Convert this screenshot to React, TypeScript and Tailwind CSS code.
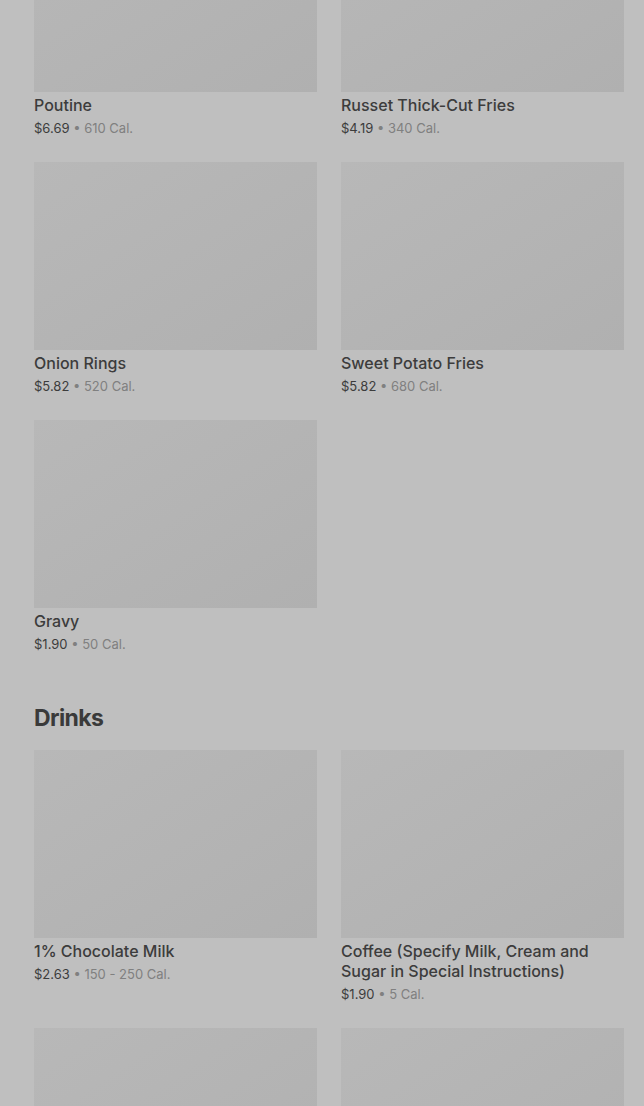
import React from "react";

type Item = { name: string; price: string; cal: string };

const sides: Item[] = [
  { name: "Poutine", price: "$6.69", cal: "610 Cal." },
  { name: "Russet Thick-Cut Fries", price: "$4.19", cal: "340 Cal." },
  { name: "Onion Rings", price: "$5.82", cal: "520 Cal." },
  { name: "Sweet Potato Fries", price: "$5.82", cal: "680 Cal." },
  { name: "Gravy", price: "$1.90", cal: "50 Cal." },
];

const drinks: Item[] = [
  { name: "1% Chocolate Milk", price: "$2.63", cal: "150 - 250 Cal." },
  { name: "Coffee (Specify Milk, Cream and Sugar in Special Instructions)", price: "$1.90", cal: "5 Cal." },
];

function Card({ item }: { item?: Item }) {
  return (
    <div className="flex flex-col">
      <div className="h-[188px] bg-gradient-to-br from-[#b8b8b8] to-[#b0b0b0]" />
      {item && (
        <>
          <div className="mt-[3px] text-[16px] leading-[20px] font-medium text-[#3c3c3c]">{item.name}</div>
          <div className="mt-[3px] text-[13px] leading-[20px]">
            <span className="text-[#3c3c3c]">{item.price}</span>
            <span className="text-[#808080]"> • {item.cal}</span>
          </div>
        </>
      )}
    </div>
  );
}

export default function App() {
  return (
    <div
      className="w-[644px] h-[1106px] overflow-hidden bg-[#bfbfbf]"
      style={{ fontFamily: "Inter, 'Noto Sans', sans-serif" }}
    >
      <div className="pl-[34px] pr-[20px] -mt-[96px]">
        <div className="grid grid-cols-2 gap-x-[24px] gap-y-[24px]">
          {sides.map((s, i) => (
            <Card key={i} item={s} />
          ))}
        </div>
        <h2 className="mt-[48px] text-[23px] leading-[32px] font-bold tracking-[-0.6px] text-[#3a3a3a]">Drinks</h2>
        <div className="mt-[16px] grid grid-cols-2 gap-x-[24px] gap-y-[24px]">
          {drinks.map((s, i) => (
            <Card key={i} item={s} />
          ))}
          <Card />
          <Card />
        </div>
      </div>
    </div>
  );
}
